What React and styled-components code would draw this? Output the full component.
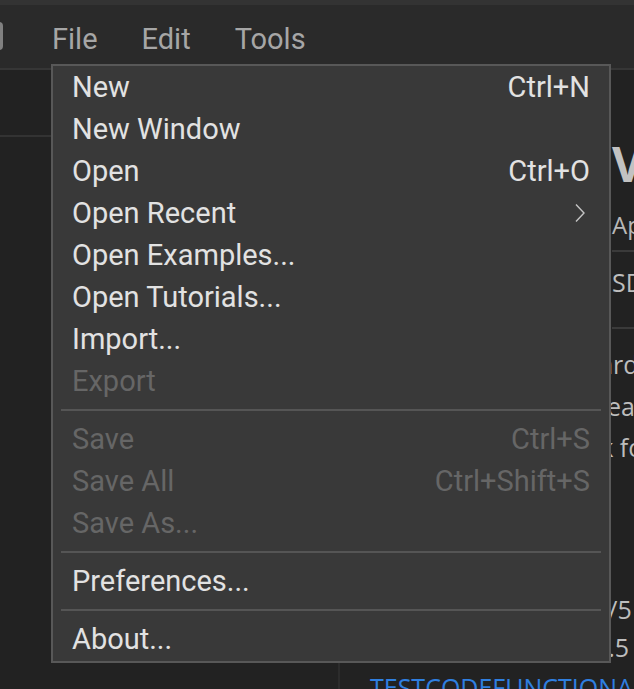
import styled, { createGlobalStyle } from "styled-components"

const GlobalStyle = createGlobalStyle`
  html, body {
    margin: 0;
    padding: 0;
    background: #222222;
    overflow: hidden;
  }
  body {
    font-family: Roboto, "Liberation Sans", sans-serif;
  }
`

const fileMenu = [
  { label: "New", shortcut: "Ctrl+N" },
  { label: "New Window" },
  { label: "Open", shortcut: "Ctrl+O" },
  { label: "Open Recent", submenu: true },
  { label: "Open Examples..." },
  { label: "Open Tutorials..." },
  { label: "Import..." },
  { label: "Export", disabled: true },
  { separator: true },
  { label: "Save", shortcut: "Ctrl+S", disabled: true },
  { label: "Save All", shortcut: "Ctrl+Shift+S", disabled: true },
  { label: "Save As...", disabled: true },
  { separator: true },
  { label: "Preferences..." },
  { separator: true },
  { label: "About..." },
]

export default function App() {
  return (
    <>
      <GlobalStyle />
      <Page>
        <TopStrip />
        <MenuBar>
          <Stub />
          <BarItem>File</BarItem>
          <BarItem>Edit</BarItem>
          <BarItem>Tools</BarItem>
        </MenuBar>
        <Body>
          <LeftPanel>
            <LeftHeader />
          </LeftPanel>
          <RightPanel>
            <HeaderRow>
              <Thumb />
              <Details>
                <Title>Vector Sensor</Title>
                <Subtitle>Application project</Subtitle>
                <MetaRow>SDK 2024.1</MetaRow>
              </Details>
            </HeaderRow>
            <Description>
              <p>Lets you test the board and its sensors in a</p>
              <p>few steps, showing readings and logging the</p>
              <p>results of each check for the current board.</p>
            </Description>
            <Facts>
              <span>2/5</span>
              <span>1.5 Core</span>
            </Facts>
            <Link>TESTCODEFUNCTIONALITY</Link>
          </RightPanel>
        </Body>

        <Menu>
          {fileMenu.map((item, i) =>
            item.separator ? (
              <Separator key={i} />
            ) : (
              <MenuItem key={i} disabled={item.disabled}>
                <span>{item.label}</span>
                {item.shortcut && <span>{item.shortcut}</span>}
                {item.submenu && (
                  <svg width="12" height="20" viewBox="0 0 12 20">
                    <path d="M2 1.5 L10 10 L2 18.5" fill="none" stroke="#c4c4c4" strokeWidth="1.4" />
                  </svg>
                )}
              </MenuItem>
            )
          )}
        </Menu>
      </Page>
    </>
  )
}

const Page = styled.div`
  position: relative;
  height: 100vh;
  display: flex;
  flex-direction: column;
  background: #222222;
`
const TopStrip = styled.div`
  height: 5px;
  background: #333333;
`
const MenuBar = styled.div`
  height: 63px;
  display: flex;
  align-items: flex-start;
  background: #2a2a2a;
  border-bottom: 2px solid #363636;
`
const Stub = styled.div`
  width: 23px;
  height: 28px;
  margin: 17px 27px 0 -20px;
  border-radius: 4px;
  background: #808080;
`
const BarItem = styled.div`
  padding: 0 22px;
  margin-top: 13px;
  line-height: 42px;
  font-size: 29px;
  color: #a6a6a6;
`
const Body = styled.div`
  flex: 1;
  display: flex;
  min-height: 0;
`
const LeftPanel = styled.div`
  width: 338px;
  flex-shrink: 0;
  border-right: 2px solid #2c2c2c;
  background: #222222;
`
const LeftHeader = styled.div`
  height: 65px;
  border-bottom: 2px solid #333333;
`
const RightPanel = styled.div`
  flex: 1;
  padding: 62px 0 0 30px;
  font-family: "Open Sans", "Noto Sans", sans-serif;
  color: #bdbdbd;
  white-space: nowrap;
  overflow: hidden;
`
const HeaderRow = styled.div`
  display: flex;
  gap: 16px;
`
const Thumb = styled.div`
  width: 226px;
  height: 180px;
  flex-shrink: 0;
  background: #2c2c2c;
`
const Details = styled.div`
  display: flex;
  flex-direction: column;
`
const Title = styled.div`
  font-size: 48px;
  font-weight: 700;
  line-height: 64px;
  color: #c2c2c2;
`
const Subtitle = styled.div`
  margin-top: 8px;
  font-size: 24px;
  line-height: 42px;
  padding-bottom: 4px;
  color: #b8b8b8;
  border-bottom: 2px solid #3a3a3a;
`
const MetaRow = styled.div`
  height: 75px;
  font-size: 25px;
  line-height: 60px;
  border-bottom: 2px solid #3a3a3a;
`
const Description = styled.div`
  margin-top: 15px;
  font-size: 25px;
  line-height: 41.5px;
  p {
    margin: 0;
  }
`
const Facts = styled.div`
  display: flex;
  flex-direction: column;
  margin-top: 121px;
  padding-left: 224px;
  font-size: 25px;
  line-height: 38px;
`
const Link = styled.div`
  margin-top: 4px;
  font-size: 25px;
  line-height: 34px;
  color: #2f7fe0;
`
const Menu = styled.div`
  position: absolute;
  left: 51px;
  top: 64px;
  width: 556px;
  padding-bottom: 1px;
  background: #393939;
  border: 2px solid #585858;
  display: flex;
  flex-direction: column;
`
const MenuItem = styled.div`
  height: 42px;
  padding: 0 19px 0 19px;
  display: flex;
  align-items: center;
  justify-content: space-between;
  font-size: 29px;
  color: ${(p) => (p.disabled ? "#666666" : "#e2e2e2")};
  svg {
    margin-right: 4px;
  }
`
const Separator = styled.div`
  height: 2px;
  margin: 7px 8px;
  background: #555555;
`
